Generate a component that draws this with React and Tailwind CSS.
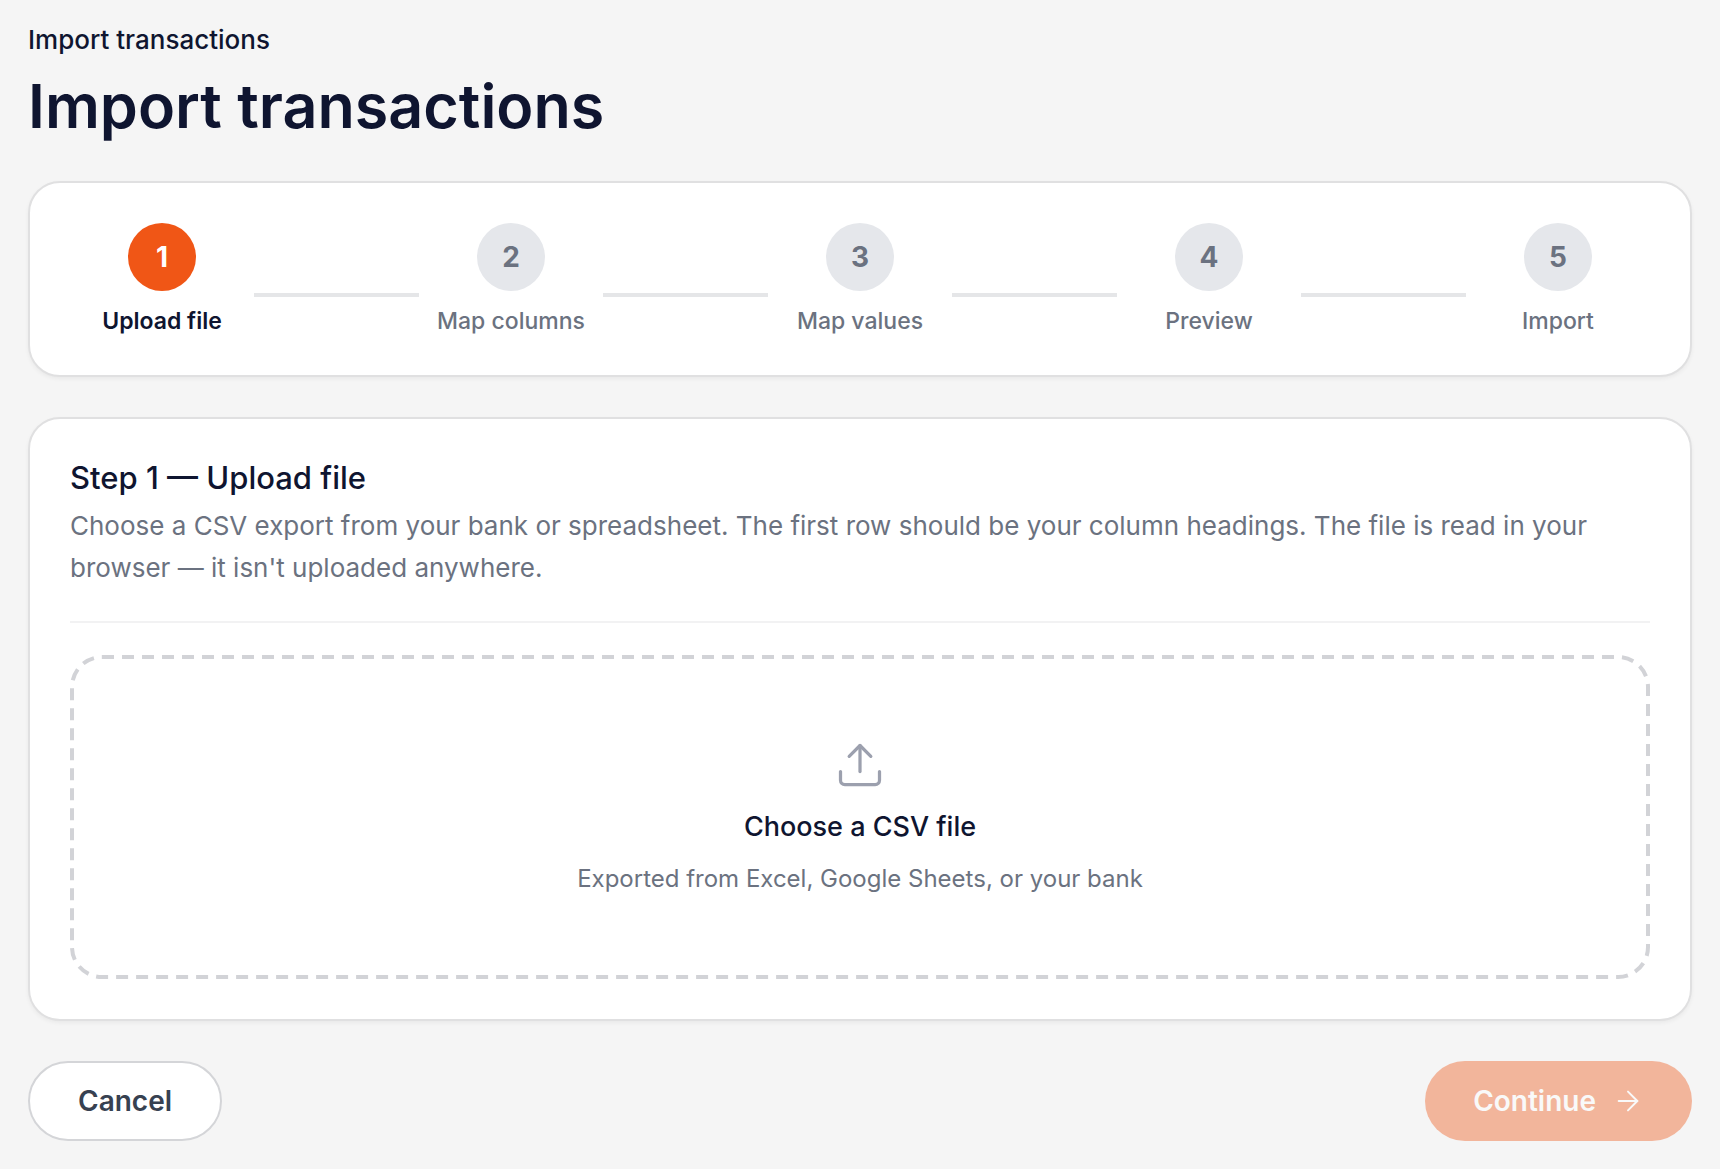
import React, { useRef, useState } from 'react';
import { ArrowRight, Upload } from 'lucide-react';

const STEPS = ['Upload file', 'Map columns', 'Map values', 'Preview', 'Import'];

function Stepper({ current }) {
  return (
    <ol className="flex items-center rounded-[32px] border-2 border-[#e0e0e1] bg-white p-10 shadow-[0_2px_4px_rgba(0,0,0,0.05)]">
      {STEPS.map((label, i) => {
        const active = i === current;
        return (
          <React.Fragment key={label}>
            {i > 0 && <li aria-hidden="true" className="mt-8 h-1 flex-1 bg-[#e5e6e8]" />}
            <li className="flex w-46 flex-col items-center gap-4" aria-current={active ? 'step' : undefined}>
              <span
                className={`flex size-17 items-center justify-center rounded-full text-[28px] font-bold ${
                  active ? 'bg-[#f05616] text-white' : 'bg-[#e5e7eb] text-[#6b7280]'
                }`}
              >
                {i + 1}
              </span>
              <span
                className={`text-[23px] leading-7 whitespace-nowrap ${
                  active ? 'font-semibold text-[#0f1530]' : 'font-medium text-[#6b7280]'
                }`}
              >
                {label}
              </span>
            </li>
          </React.Fragment>
        );
      })}
    </ol>
  );
}

// Long-dash outline, border-dashed draws its dashes too short at this width
function DashedOutline() {
  return (
    <svg className="pointer-events-none absolute inset-0 size-full" aria-hidden="true">
      <rect
        x="2"
        y="2"
        rx="30"
        className="h-[calc(100%-4px)] w-[calc(100%-4px)] fill-none stroke-[#d2d3d7]"
        strokeWidth="4"
        strokeDasharray="12 8"
      />
    </svg>
  );
}

export default function App() {
  const [file, setFile] = useState(null);
  const inputRef = useRef(null);

  return (
    <div className="min-h-screen bg-[#f5f5f5] px-7 pt-5 pb-7 font-['Inter',sans-serif] text-[#0f1530]">
      <header className="mb-10">
        <p className="text-[26px] leading-10 font-medium">Import transactions</p>
        <h1 className="mt-3 text-[61px] leading-[69px] font-semibold">Import transactions</h1>
      </header>

      <main className="flex flex-col gap-10">
        <Stepper current={0} />

        <section className="rounded-[32px] border-2 border-[#e0e0e1] bg-white p-10 shadow-[0_2px_4px_rgba(0,0,0,0.05)]">
          <div className="mb-8 border-b-2 border-[#f2f2f3] pb-8">
            <h2 className="text-[31px] leading-[38px] font-medium">Step 1 — Upload file</h2>
            <p className="mt-2 text-[26px] leading-[42px] text-[#6b7280]">
              Choose a CSV export from your bank or spreadsheet. The first row should be your column headings. The file is
              read in your browser — it isn't uploaded anywhere.
            </p>
          </div>

          <button
            type="button"
            onClick={() => inputRef.current.click()}
            className="relative flex w-full flex-col items-center gap-4 rounded-[32px] py-21"
          >
            <DashedOutline />
            <Upload size={52} strokeWidth={1.5} className="text-[#9ca0ae]" />
            <span className="text-[27px] leading-10 font-medium">{file ? file.name : 'Choose a CSV file'}</span>
            <span className="text-2xl text-[#6b7280]">Exported from Excel, Google Sheets, or your bank</span>
          </button>
          <input
            ref={inputRef}
            type="file"
            accept=".csv"
            aria-label="CSV file"
            className="hidden"
            onChange={e => setFile(e.target.files[0])}
          />
        </section>

        <div className="flex items-center justify-between">
          <button
            type="button"
            className="h-20 rounded-full border-2 border-[#d4d5d8] bg-white px-12 text-[28px] font-semibold text-[#374151]"
          >
            Cancel
          </button>
          <button
            type="button"
            disabled={!file}
            className="flex h-20 items-center gap-4 rounded-full bg-[#f05616] px-12 text-[28px] font-semibold text-white disabled:opacity-40"
          >
            Continue <ArrowRight size={32} strokeWidth={1.5} />
          </button>
        </div>
      </main>
    </div>
  );
}
